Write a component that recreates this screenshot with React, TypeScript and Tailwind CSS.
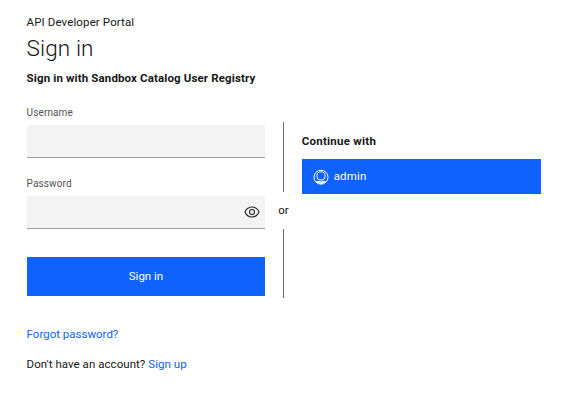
import React from "react";

function ViewIcon() {
  return (
    <svg viewBox="0 0 32 32" className="h-4 w-4 fill-[#2b2b2b] stroke-[#2b2b2b] stroke-[0.2]" aria-hidden="true">
      <path d="M30.94,15.66A16.69,16.69,0,0,0,16,5,16.69,16.69,0,0,0,1.06,15.66a1,1,0,0,0,0,.68A16.69,16.69,0,0,0,16,27,16.69,16.69,0,0,0,30.94,16.34,1,1,0,0,0,30.94,15.66ZM16,25c-5.3,0-10.9-3.93-12.93-9C5.1,10.93,10.7,7,16,7s10.9,3.93,12.93,9C26.9,21.07,21.3,25,16,25Z" />
      <path d="M16,10a6,6,0,1,0,6,6A6,6,0,0,0,16,10Zm0,10a4,4,0,1,1,4-4A4,4,0,0,1,16,20Z" />
    </svg>
  );
}

function UserIcon() {
  return (
    <svg viewBox="0 0 16 16" className="h-4 w-4" fill="none" stroke="white" aria-hidden="true">
      <circle cx="8" cy="8.2" r="7" strokeWidth="1" />
      <circle cx="8" cy="6.9" r="4.1" strokeWidth="1" />
      <path d="M2.4 12.3C4 12.3 4.5 12.2 5.4 11.8Q8 13 10.6 11.8C11.5 12.2 12 12.3 13.6 12.3A7 7 0 0 1 2.4 12.3Z" fill="white" stroke="none" />
    </svg>
  );
}

function Field({ label, id, password = false }: { label: string; id: string; password?: boolean }) {
  return (
    <div>
      <label htmlFor={id} className="block h-5 text-[10px] leading-4 tracking-[0.12px] text-[#525252]">
        {label}
      </label>
      <div className="flex h-[33px] items-center border-b border-[#a0a0a0] bg-[#f3f3f3] pr-[5px]">
        <input id={id} type={password ? "password" : "text"} className="h-full min-w-0 flex-1 bg-transparent px-3 text-xs outline-none" />
        {password && (
          <button type="button" aria-label="Show password">
            <ViewIcon />
          </button>
        )}
      </div>
    </div>
  );
}

export default function App() {
  return (
    <main className="h-[400px] w-[587px] bg-white pt-3.5 pl-[26.6px] font-['Roboto','Liberation_Sans',sans-serif] text-[11.5px] tracking-[0.12px] text-[#161616]">
      <p className="leading-4">API Developer Portal</p>
      <h1 className="mt-0.5 text-[22.5px] leading-8 font-light">Sign in</h1>
      <h2 className="mt-1.5 leading-4 font-bold tracking-[0.13px]">Sign in with Sandbox Catalog User Registry</h2>

      <div className="mt-[19px] flex">
        <form className="w-[238.8px]">
          <Field label="Username" id="username" />
          <div className="mt-[18px]">
            <Field label="Password" id="password" password />
          </div>
          <button type="button" className="mt-7 h-[39px] w-full bg-[#0f62fe] tracking-normal text-white">
            Sign in
          </button>
        </form>

        <div className="mt-[17px] flex w-[36.3px] flex-col items-center">
          <span className="h-[70px] w-[1.5px] bg-[#6f6f6f]" />
          <span className="h-[37px] leading-[36px]">or</span>
          <span className="h-[69px] w-[1.5px] bg-[#6f6f6f]" />
        </div>

        <section className="mt-7 w-[239px]">
          <h3 className="leading-4 font-bold tracking-[0.25px]">Continue with</h3>
          <button type="button" className="mt-2.5 flex h-[35px] w-full items-center gap-[5px] bg-[#0f62fe] pl-[11px] text-white">
            <UserIcon />
            <span className="tracking-[0.15px]">admin</span>
          </button>
        </section>
      </div>

      <p className="mt-7 leading-4 tracking-normal text-[#0f62fe]">Forgot password?</p>
      <p className="mt-3.5 leading-4 tracking-[0.05px]">
        Don't have an account? <span className="text-[#0f62fe]">Sign up</span>
      </p>
    </main>
  );
}
